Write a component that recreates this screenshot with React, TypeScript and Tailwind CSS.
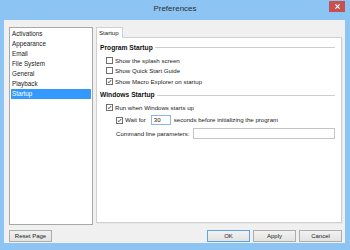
import React from 'react';

const FONT = { fontFamily: '"Liberation Sans", Arial, sans-serif' };

const Check = ({ checked }: { checked?: boolean }) => (
  <span className="w-[7px] h-[7px] border border-[#707070] bg-white shrink-0 flex items-center justify-center">
    {checked && (
      <svg viewBox="0 0 7 7" className="w-[7px] h-[7px]">
        <path d="M1.2 3.6 L2.8 5.2 L5.9 1.4" fill="none" stroke="#222" strokeWidth="1.1" />
      </svg>
    )}
  </span>
);

const Row = ({ checked, label, cls }: { checked?: boolean; label: string; cls: string }) => (
  <div className={`flex items-center gap-[2px] ${cls}`}>
    <Check checked={checked} />
    <span>{label}</span>
  </div>
);

const Section = ({ title, cls }: { title: string; cls: string }) => (
  <div className={`flex items-center gap-[2px] h-[10px] ${cls}`}>
    <span className="font-bold text-[6.7px] text-[#111]">{title}</span>
    <div className="flex-1 h-[2px] border-t border-[#cdcdcd] border-b border-b-white mr-[6px]" />
  </div>
);

const Btn = ({ label, primary, cls }: { label: string; primary?: boolean; cls?: string }) => (
  <button
    className={`h-[12px] w-[43px] text-[6px] leading-none text-[#222] bg-gradient-to-b from-[#f2f2f2] to-[#e3e3e3] border ${
      primary ? 'border-[#5ba4e5]' : 'border-[#adadad]'
    } ${cls ?? ''}`}
  >
    {label}
  </button>
);

export default function App() {
  const items = ['Activations', 'Appearance', 'Email', 'File System', 'General', 'Playback', 'Startup'];
  return (
    <div className="w-[350px] h-[250px] bg-[#8cc4f4] flex flex-col overflow-hidden text-[6.1px] text-[#1a1a1a]" style={FONT}>
      {/* Title bar */}
      <div className="relative h-[20px] shrink-0 flex items-center justify-center">
        <span className="text-[8px] text-[#2d2d2d] -mt-[2px]">Preferences</span>
        <div className="absolute right-[5px] top-[1px] w-[16px] h-[11px] bg-[#c75050] flex items-center justify-center">
          <svg viewBox="0 0 6 6" className="w-[5px] h-[5px]">
            <path d="M0.5 0.5 L5.5 5.5 M5.5 0.5 L0.5 5.5" stroke="#fff" strokeWidth="1.4" />
          </svg>
        </div>
      </div>

      {/* Client */}
      <div className="flex-1 ml-[4px] mr-[5px] mb-[7px] bg-[#f0f0f0] flex flex-col pt-[7px] pl-[5px] pr-[3px]">
        <div className="flex gap-[3px] items-start">
          {/* List */}
          <div className="w-[84px] h-[198px] bg-white border border-[#a8a8a8] pt-[1px] px-[1px] text-[6.3px]">
            {items.map((it) => (
              <div
                key={it}
                className={`h-[10px] flex items-center pl-[1px] ${
                  it === 'Startup' ? 'bg-[#3399ff] text-white' : ''
                }`}
              >
                {it}
              </div>
            ))}
          </div>

          {/* Tabs */}
          <div className="flex-1 flex flex-col">
            <div className="flex h-[10px]">
              <div className="w-[27px] h-[11px] bg-white border border-[#d0d0d0] border-b-0 flex items-center pl-[2px] z-10">
                Startup
              </div>
            </div>
            <div className="h-[186px] bg-white border border-[#d0d0d0] shadow-[1px_1px_0_#e8e8e8] flex flex-col pl-[3px]">
              <Section title="Program Startup" cls="mt-[5px]" />
              <div className="pl-[6px] flex flex-col">
                <Row label="Show the splash screen" cls="h-[10.5px] mt-[2px]" />
                <Row label="Show Quick Start Guide" cls="h-[10.5px]" />
                <Row checked label="Show Macro Explorer on startup" cls="h-[10.5px]" />
              </div>
              <Section title="Windows Startup" cls="mt-[4px]" />
              <div className="pl-[6px] flex flex-col">
                <Row checked label="Run when Windows starts up" cls="h-[10px] mt-[2px]" />
                <div className="pl-[10px] flex flex-col">
                  <div className="flex items-center h-[11px] mt-[2px]">
                    <Check checked />
                    <span className="ml-[2px]">Wait for</span>
                    <div className="ml-[5px] w-[20px] h-[10px] border border-[#8fb8e0] bg-white flex items-center pl-[2px]">
                      30
                    </div>
                    <span className="ml-[3px]">seconds before initializing the program</span>
                  </div>
                  <div className="flex items-center h-[12px] mt-[2px]">
                    <span>Command line parameters:</span>
                    <div className="ml-[3px] w-[142px] h-[11px] border border-[#c4c4c4] bg-white" />
                  </div>
                </div>
              </div>
            </div>
          </div>
        </div>

        {/* Buttons */}
        <div className="flex items-center mt-[5px]">
          <Btn label="Reset Page" />
          <div className="flex-1" />
          <div className="flex gap-[3px]">
            <Btn label="OK" primary />
            <Btn label="Apply" />
            <Btn label="Cancel" />
          </div>
        </div>
      </div>
    </div>
  );
}
